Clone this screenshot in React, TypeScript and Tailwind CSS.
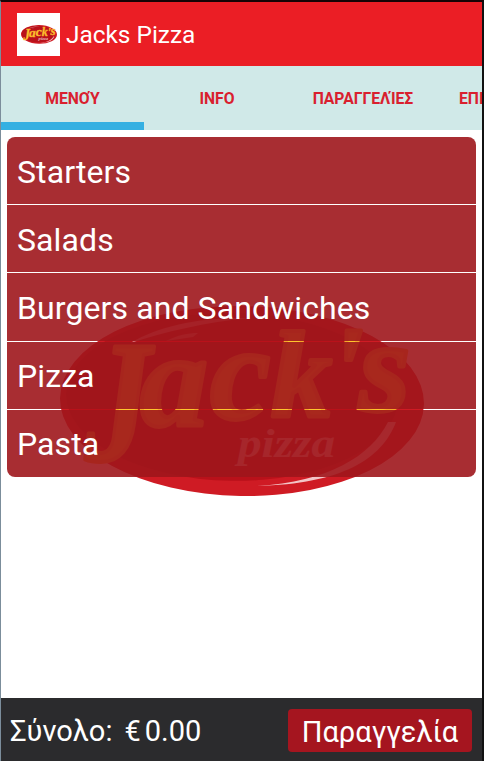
import React from "react";
import clsx from "clsx";

const tabs = ["ΜΕΝΟΎ", "INFO", "ΠΑΡΑΓΓΕΛΊΕΣ", "ΕΠΙΚΟΙΝΩΝΊΑ"];

const categories = [
  "Starters",
  "Salads",
  "Burgers and Sandwiches",
  "Pizza",
  "Pasta",
];

const Logo = ({ className }: { className?: string }) => (
  <svg viewBox="0 0 364 192" className={clsx("overflow-visible", className)}>
    <g transform="rotate(1 182 95)">
      <ellipse cx="182" cy="95" rx="182" ry="95" fill="#cf1b24" />
      <ellipse cx="172" cy="91" rx="166" ry="84" fill="#b9111a" />
    </g>
    <path
      d="M70 37C100 20 138 11 190 12C145 16 105 26 70 37Z"
      fill="#fff"
      opacity="0.5"
    />
    <path d="M106 35C118 29 128 27 138 27L133 31Z" fill="#fff" opacity="0.4" />
    <path
      d="M197 180C268 176 311 150 328 116L336 116C322 153 282 178 197 180Z"
      fill="#fff"
      opacity="0.75"
    />
    <text
      fill="#ffc52e"
      stroke="#f6a82b"
      strokeWidth="4"
      strokeLinejoin="round"
      className="font-['Liberation_Serif',serif] font-bold italic"
    >
      <tspan x="25" y="154" fontSize="174" textLength="66" lengthAdjust="spacingAndGlyphs">
        J
      </tspan>
      <tspan x="80" y="120" fontSize="136">
        a
      </tspan>
      <tspan x="150" y="113" fontSize="136">
        c
      </tspan>
      <tspan x="211" y="110" fontSize="122">
        k
      </tspan>
      <tspan x="269" y="107" fontSize="124">
        '
      </tspan>
      <tspan x="299" y="105" fontSize="132">
        s
      </tspan>
    </text>
    <text
      x="178"
      y="151"
      fontSize="41"
      textLength="97"
      lengthAdjust="spacingAndGlyphs"
      fill="#fff"
      opacity="0.7"
      className="font-['Liberation_Serif',serif] font-bold italic"
    >
      pizza
    </text>
  </svg>
);

const App = () => {
  return (
    <div className="relative flex h-[761px] w-[484px] flex-col overflow-hidden border-t-2 border-r-2 border-l border-t-[#170305] border-r-[#111] border-l-[#7b8d9b] bg-white font-[Roboto,sans-serif]">
      <header className="flex h-16 shrink-0 items-center bg-[#eb1e25] pl-4">
        <div className="flex h-[43px] w-[43px] items-center justify-center bg-white">
          <Logo className="w-9" />
        </div>
        <h1 className="ml-1.5 pt-[3px] text-[24.4px] text-white">
          Jacks Pizza
        </h1>
      </header>

      <nav className="flex h-16 shrink-0 overflow-hidden bg-[#d0e9e8]">
        {tabs.map((tab, index) => (
          <button
            key={tab}
            className={clsx(
              "h-full shrink-0 border-b-8 pt-2.5 text-[15.7px] font-bold text-[#d9202e]",
              index === 0
                ? "w-[143px] border-[#35b0e2]"
                : "w-[146px] border-transparent",
              index === 3 && "pl-[23px] text-left"
            )}
          >
            {tab}
          </button>
        ))}
      </nav>

      <main className="relative flex-1 px-1.5 pt-[7px]">
        <Logo className="absolute top-[176px] left-[59px] w-[364px]" />
        <ul className="relative flex w-[469px] flex-col gap-px overflow-hidden rounded-lg">
          {categories.map((category) => (
            <li
              key={category}
              className="flex h-[67.2px] items-center bg-[#9e161c]/90 pt-0.5 pl-2.5 text-[32px] tracking-[0.1px] text-white"
            >
              {category}
            </li>
          ))}
        </ul>
      </main>

      <footer className="flex h-[63px] shrink-0 items-center justify-between bg-[#2b2b2d] pt-0.5 pr-2.5 pl-[9px] text-[29px] text-white">
        <p className="pt-0.5">
          <span>Σύνολο:</span>
          <span className="ml-3">€</span>
          <span className="ml-1">0.00</span>
        </p>
        <button className="h-[43px] w-[184px] rounded bg-[#a5151f] pt-0.5">
          Παραγγελία
        </button>
      </footer>
    </div>
  );
};

export default App;
